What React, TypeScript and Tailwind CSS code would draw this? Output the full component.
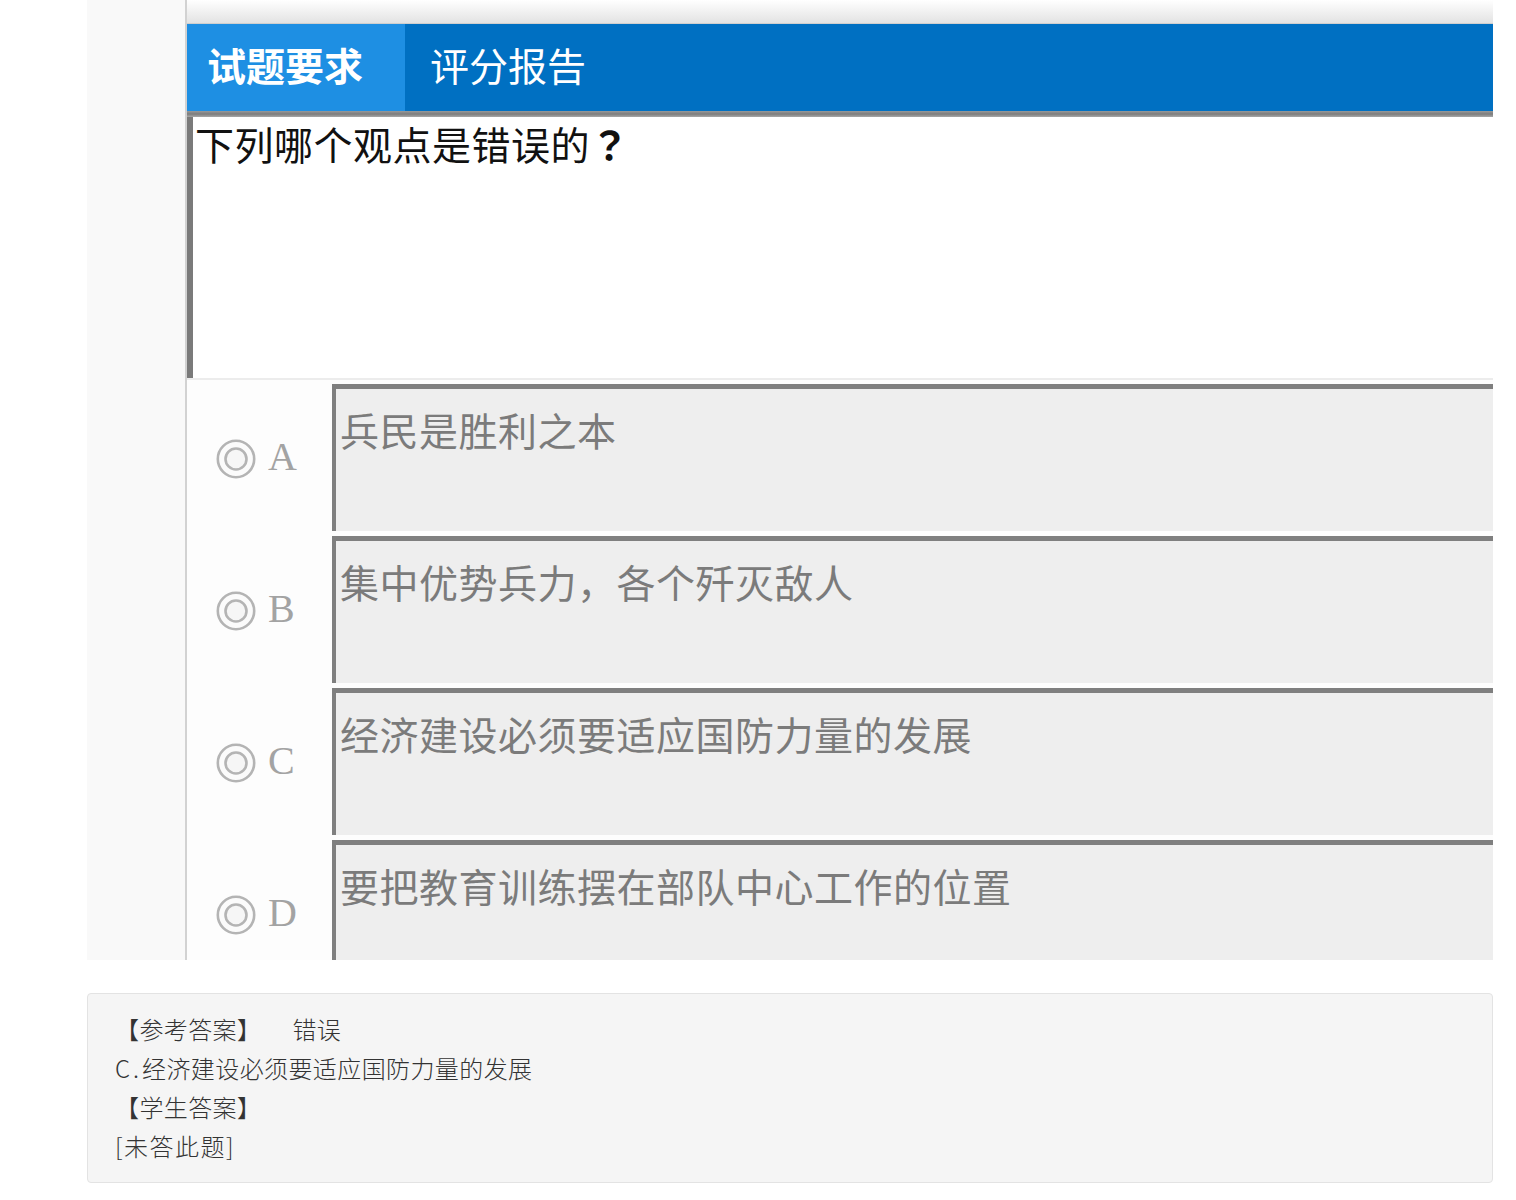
const cjk = "font-['Noto_Sans_CJK_SC','Noto_Sans',sans-serif]";

const options = [
  { key: "A", text: "兵民是胜利之本" },
  { key: "B", text: "集中优势兵力，各个歼灭敌人" },
  { key: "C", text: "经济建设必须要适应国防力量的发展" },
  { key: "D", text: "要把教育训练摆在部队中心工作的位置" },
];

function Radio() {
  return (
    <svg width="40" height="40" viewBox="0 0 40 40" className="shrink-0">
      <circle cx="20" cy="20" r="18.2" fill="#fbfbfb" stroke="#b4b4b4" strokeWidth="2.6" />
      <circle cx="20" cy="20" r="10.5" fill="#f6f6f6" stroke="#b4b4b4" strokeWidth="2.6" />
    </svg>
  );
}

function OptionRow({ k, text }: { k: string; text: string }) {
  return (
    <div className="flex h-[152px] shrink-0 pt-[2px]">
      <div className="flex w-[145px] shrink-0 items-center pl-[29px]">
        <Radio />
        <span className="ml-[12px] font-['Liberation_Serif',serif] text-[40px] leading-none text-[#a3a3a3] -mt-[4px]">
          {k}
        </span>
      </div>
      <div className="mb-[3px] flex-1 border-l-[4px] border-t-[5px] border-[#7f7f7f] bg-[#eeeeee] pl-[4px] pt-[21px]">
        <div className={`${cjk} text-[39px] leading-none tracking-[0.5px] text-[#7b7b7b]`}>{text}</div>
      </div>
    </div>
  );
}

export default function App() {
  return (
    <div className="min-h-[1200px] bg-white">
      <div className="ml-[87px] w-[1406px]">
        {/* screenshot of the exam client */}
        <div className="flex h-[960px] overflow-hidden">
          <div className="w-[100px] shrink-0 border-r-2 border-[#d2d2d2] bg-[#f9f9f9]" />
          <div className="flex flex-1 flex-col bg-[#fdfdfd]">
            <div className="h-[24px] shrink-0 border-b border-[#cfcfcf] bg-gradient-to-b from-white to-[#e3e3e3]" />
            <div className={`${cjk} flex h-[87px] shrink-0 bg-[#0070c2] text-[39px] font-bold leading-none text-white`}>
              <div className="flex w-[218px] items-center bg-[#1e8fe3] pb-[6px] pl-[20px]">试题要求</div>
              <div className="flex items-center pb-[6px] pl-[25px] font-normal">评分报告</div>
            </div>
            <div className="h-[6px] shrink-0 bg-gradient-to-b from-[#9a9a9a] via-[#7c7c7c] to-[#a8a8a8]" />
            <div className="h-[261px] shrink-0 border-l-[6px] border-[#7a7a7a] bg-white pl-[2px] pt-[7px]">
              <div className={`${cjk} text-[39px] leading-none tracking-[0.5px] text-[#111]`}>
                下列哪个观点是错误的
                <span className="font-['Noto_Sans_CJK_JP',sans-serif] font-bold">？</span>
              </div>
            </div>
            <div className="h-[4px] shrink-0 border-t-2 border-[#ececec]" />
            {options.map((o) => (
              <OptionRow key={o.key} k={o.key} text={o.text} />
            ))}
          </div>
        </div>

        {/* answer panel */}
        <div
          className={`${cjk} mt-[33px] h-[190px] rounded-[4px] border border-[#e3e3e3] bg-[#f5f5f5] pl-[27px] pt-[15px] text-[24px] font-light leading-[39px] tracking-[0.4px] text-[#333]`}
        >
          <div>
            【参考答案】<span className="ml-[31px]">错误</span>
          </div>
          <div>
            <span className="tracking-[3px]">C.</span>经济建设必须要适应国防力量的发展
          </div>
          <div>【学生答案】</div>
          <div className="tracking-[1.5px]">[未答此题]</div>
        </div>
      </div>
    </div>
  );
}
